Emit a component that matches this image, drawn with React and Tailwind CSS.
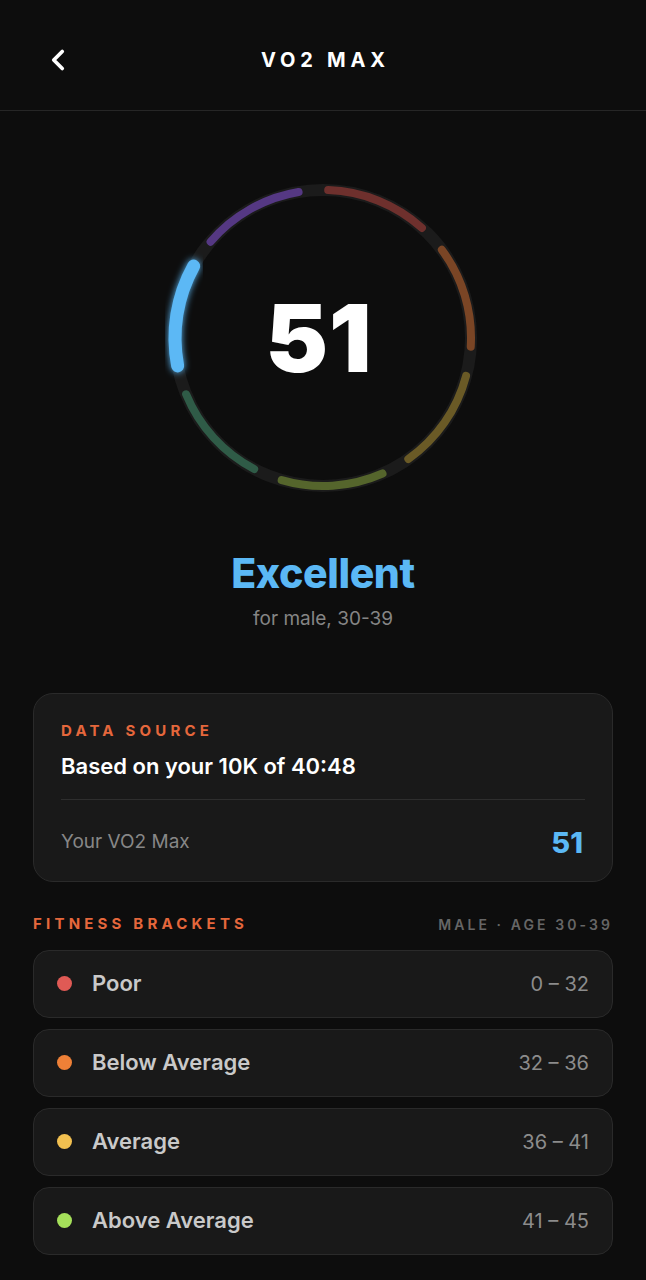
import { ChevronLeft } from 'lucide-react'

const SEGMENTS = [
  { color: '#6e302d' }, // poor
  { color: '#7a4525' }, // below average
  { color: '#6a5a26' }, // average
  { color: '#55652c' }, // above average
  { color: '#2f5b47' }, // good
  { color: '#5bb8f5', active: true }, // excellent
  { color: '#553883' }, // superior
]

const BRACKETS = [
  { label: 'Poor', range: '0 – 32', dot: 'bg-[#e05a55]' },
  { label: 'Below Average', range: '32 – 36', dot: 'bg-[#ee8037]' },
  { label: 'Average', range: '36 – 41', dot: 'bg-[#f2c050]' },
  { label: 'Above Average', range: '41 – 45', dot: 'bg-[#a5e05a]' },
]

function arcPath(cx, cy, r, a0, a1) {
  const rad = a => ((a - 90) * Math.PI) / 180
  const x0 = cx + r * Math.cos(rad(a0))
  const y0 = cy + r * Math.sin(rad(a0))
  const x1 = cx + r * Math.cos(rad(a1))
  const y1 = cy + r * Math.sin(rad(a1))
  return `M ${x0} ${y0} A ${r} ${r} 0 0 1 ${x1} ${y1}`
}

function Ring() {
  const step = 360 / 7
  return (
    <div className="relative w-[330px] h-[330px]">
      <svg width="330" height="330" viewBox="0 0 330 330" className="absolute inset-0">
        <defs>
          <filter id="glow" x="-50%" y="-50%" width="200%" height="200%">
            <feGaussianBlur stdDeviation="3.5" result="b" />
            <feMerge>
              <feMergeNode in="b" />
              <feMergeNode in="SourceGraphic" />
            </feMerge>
          </filter>
        </defs>
        <circle cx="165" cy="165" r="148" fill="none" stroke="#1b1b1b" strokeWidth="12" />
        {SEGMENTS.map((s, i) => (
          <path
            key={i}
            d={arcPath(165, 165, 148, i * step + 2, (i + 1) * step - 9.5)}
            fill="none"
            stroke={s.color}
            strokeWidth={s.active ? 13 : 8}
            strokeLinecap="round"
            filter={s.active ? 'url(#glow)' : undefined}
          />
        ))}
      </svg>
      <div className="absolute inset-0 flex items-center justify-center">
        <span className="text-white text-[94px] font-black leading-none tracking-[0.01em] pr-[8px] [font-family:Inter,sans-serif]">51</span>
      </div>
    </div>
  )
}

export default function App() {
  return (
    <div className="w-[646px] min-h-[1280px] bg-[#0d0d0d] [font-family:Inter,'Liberation_Sans',sans-serif]">
      {/* Header */}
      <div className="h-[111px] relative border-b border-[#262626] flex items-center pt-[10px]">
        <ChevronLeft size={34} strokeWidth={2.6} className="text-white absolute left-[41px] top-[43px]" />
        <div className="w-full text-center text-white text-[20px] font-bold tracking-[0.24em] pl-[0.24em]">VO2 MAX</div>
      </div>

      {/* Ring */}
      <div className="flex justify-center pt-[62px]">
        <Ring />
      </div>

      <div className="flex flex-col items-center mt-[50px]">
        <div className="text-[#5bb8f5] text-[41px] font-extrabold leading-none tracking-[-0.01em]">Excellent</div>
        <div className="text-[#858585] text-[19px] mt-[11px]">for male, 30-39</div>
      </div>

      {/* Data source card */}
      <div className="mx-[33px] mt-[59px] rounded-[20px] bg-[#191919] border border-[#2a2a2a] px-[27px] pt-[29px] pb-[17px]">
        <div className="text-[#e5673c] text-[15px] font-bold tracking-[0.28em] leading-none">DATA SOURCE</div>
        <div className="text-white text-[22px] font-semibold mt-[17px] leading-none">Based on your 10K of 40:48</div>
        <div className="h-px bg-[#2e2e2e] mt-[22px]" />
        <div className="flex items-center justify-between mt-[21px]">
          <span className="text-[#878787] text-[19px]">Your VO2 Max</span>
          <span className="text-[#5bb8f5] text-[29px] font-extrabold pr-[2px]">51</span>
        </div>
      </div>

      {/* Fitness brackets */}
      <div className="mx-[33px] mt-[31px] flex items-center justify-between">
        <span className="text-[#e5673c] text-[15px] font-bold tracking-[0.28em]">FITNESS BRACKETS</span>
        <span className="text-[#666666] text-[14px] font-semibold tracking-[0.22em]">MALE · AGE 30-39</span>
      </div>

      <div className="mx-[33px] mt-[14px] flex flex-col gap-[11px]">
        {BRACKETS.map(b => (
          <div key={b.label} className="h-[68px] rounded-[16px] bg-[#191919] border border-[#2a2a2a] flex items-center pl-[23px] pr-[23px]">
            <span className={`w-[15px] h-[15px] rounded-full ${b.dot}`} />
            <span className="ml-[20px] text-[#c9c9c9] text-[22px] font-semibold">{b.label}</span>
            <span className="ml-auto text-[#8c8c8c] text-[20px]">{b.range}</span>
          </div>
        ))}
      </div>
    </div>
  )
}
